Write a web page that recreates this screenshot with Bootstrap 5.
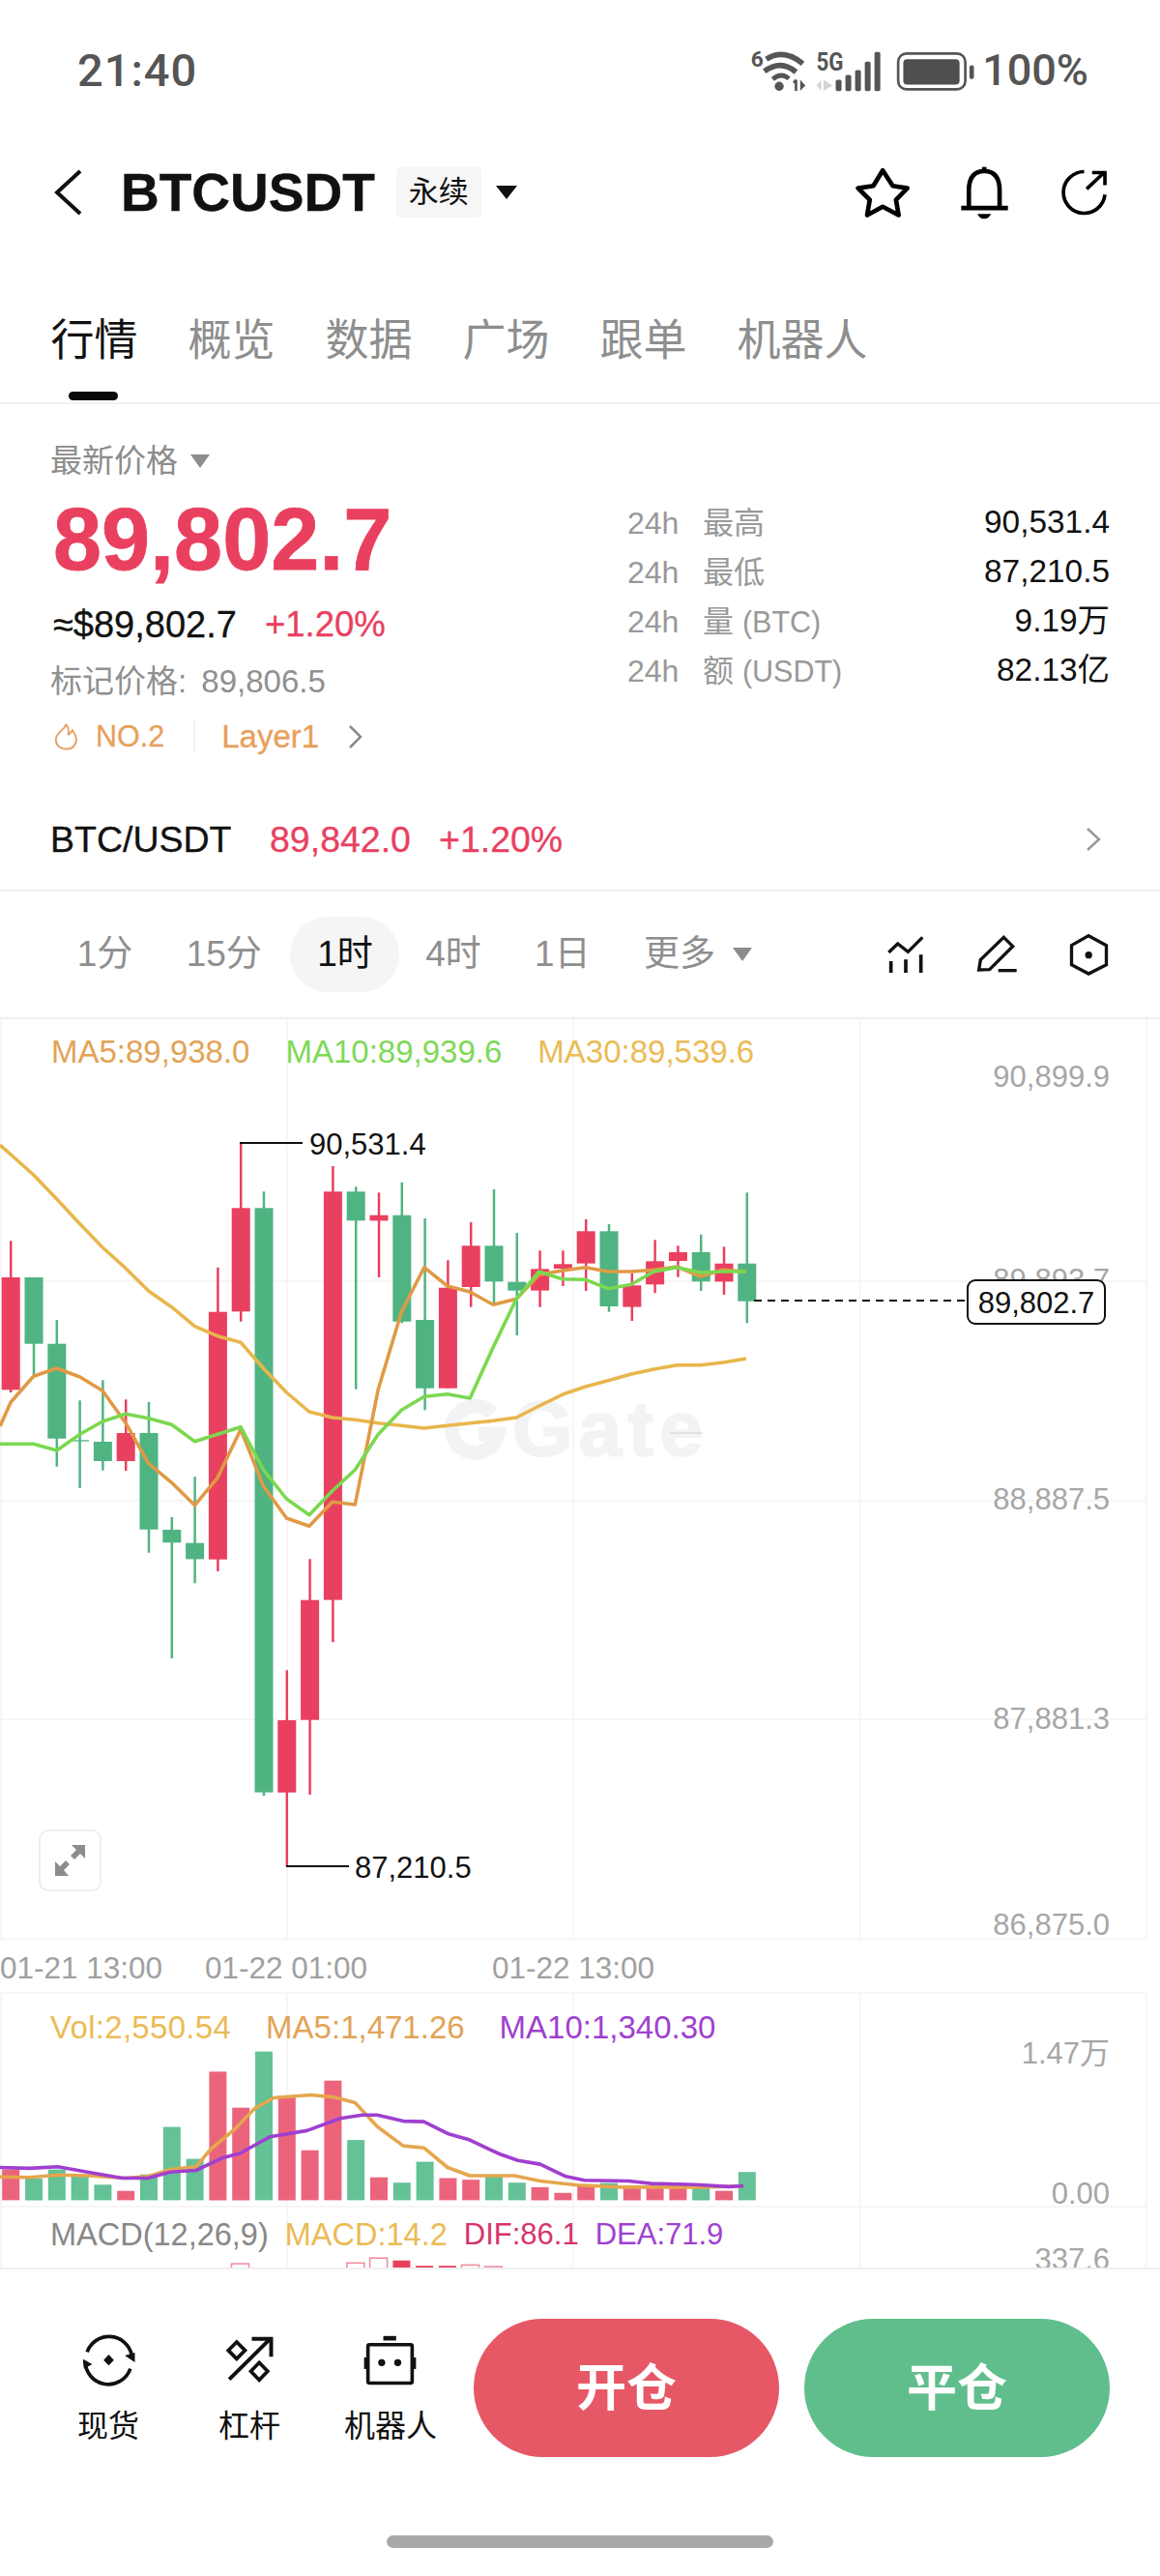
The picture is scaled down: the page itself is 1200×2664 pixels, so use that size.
<!DOCTYPE html>
<html lang="zh-CN">
<head>
  <meta charset="UTF-8" />
  <title>BTCUSDT</title>
  <link rel="stylesheet" href="https://cdn.jsdelivr.net/npm/bootstrap@5.3.3/dist/css/bootstrap.min.css" />
  <style>
    body { font-family: "Liberation Sans", "Noto Sans CJK SC", sans-serif; color: #111; background: #fff; width: 1200px; }
    svg { display: block; flex: none; }

    .status-row { height: 146px; padding: 0 74px 0 80px; color: #555; font-family: Roboto, "Liberation Sans", sans-serif; font-weight: 500; }
    .status-time { font-size: 47px; letter-spacing: 1px; }
    .status-pct { font-size: 45px; margin-left: 7px; }
    .battery-ico { margin-left: 13px; }
    .st-small { font-family: Roboto, sans-serif; font-weight: 700; fill: #555; }

    .head-row { height: 102px; padding: 4px 52px 0; }
    .head-title { font-size: 55px; font-weight: 700; margin-left: 37px; line-height: 1; -webkit-text-stroke: .4px #111; }
    .perp-tag { width: 88px; height: 52px; margin-left: 22px; background: #f6f6f6; font-size: 31px; border-radius: 4px; }
    .tri { width: 0; height: 0; border-style: solid; border-color: transparent; border-bottom-width: 0; }
    .tri-head { border-width: 14px 11.5px 0; border-top-color: #111; margin-left: 15px; }
    .tri-small { border-width: 14px 10px 0; border-top-color: #8c8c8c; }
    .head-icons { gap: 50px; }

    .tabs-row { height: 170px; padding: 74px 0 0 52.5px; gap: 52px; border-bottom: 2px solid #f2f2f2; align-items: flex-start; }
    .tab-link { padding: 0; font-size: 45px; line-height: 62px; color: #8e8e8e; position: relative; height: 88px; }
    .tab-link:hover { color: #8e8e8e; }
    .tab-on, .tab-on:hover { color: #111; }
    .tab-on::after { content: ""; position: absolute; left: 18px; top: 83px; width: 51px; height: 9px; border-radius: 5px; background: #0a0a0a; }

    .info-box { padding: 0 52px; height: 504px; border-bottom: 2px solid #f0f0f0; }
    .price-col { padding-top: 35px; }
    .last-label { font-size: 33px; line-height: 48px; color: #8c8c8c; gap: 13px; }
    .big-price { font-size: 90px; font-weight: 700; line-height: 100px; color: #e9405f; margin: 7px 0 0 3px; -webkit-text-stroke: .8px #e9405f; }
    .sub-price { font-size: 38px; line-height: 50px; margin: 13px 0 0 3px; gap: 29px; -webkit-text-stroke: .3px currentColor; }
    .sub-chg { font-size: 36.5px; }
    .txt-red { color: #e9405f; }
    .mark-line { font-size: 33px; line-height: 44px; color: #909090; margin-top: 12px; word-spacing: 6px; }
    .hot-row { height: 44px; margin: 13px 0 0 4px; font-size: 33px; color: #e8a05c; -webkit-text-stroke: .3px #e8a05c; }
    .hot-no { margin-left: 18px; font-size: 30.5px; }
    .hot-div { width: 2px; height: 33px; background: #f2f2f2; margin: 0 27px 0 30px; }
    .hot-arrow { margin-left: 30px; }
    .stats-col { width: 499px; padding-top: 97px; }
    .stat-row { height: 51px; font-size: 32px; }
    .stat-key { color: #999; }
    .stat-key i { display: inline-block; width: 78px; font-style: normal; }
    .stat-unit { font-size: 30.5px; }
    .stat-val { font-size: 33.4px; }
    .pair-row { height: 50px; margin-top: 59px; font-size: 37.5px; -webkit-text-stroke: .3px currentColor; }
    .pair-name { width: 227px; }
    .pair-chg { margin-left: 29px; }

    .tf-row { height: 132px; padding: 0 52px; border-bottom: 2px solid #f0f0f0; }
    .tf-item { padding: 0 27.7px; height: 78px; line-height: 78px; font-size: 37px; color: #8e8e8e; border-radius: 39px; }
    .tf-on { background: #f5f5f5; color: #111; margin: 0 -1px 0 2px; }
    .tf-more { margin-left: -10px; }
    .tf-icons { gap: 52px; }

    .chart-box { height: 1291px; overflow: hidden; }
    .legend-row { left: 52px; height: 40px; line-height: 40px; font-size: 33px; white-space: nowrap; }
    .legend-ma { top: 14px; left: 53px; gap: 37px; }
    .legend-vol { top: 1023px; gap: 36px; }
    .legend-macd { top: 1237px; gap: 17px; font-size: 32.5px; }
    .c-orange { color: #e2a356; }
    .c-green { color: #7ed957; }
    .c-yellow { color: #ebbb55; }
    .c-purple { color: #a03fd0; }
    .c-pink { color: #d6336c; }
    .c-grey { color: #888; }
    .vol-wide { letter-spacing: .3px; }
    .macd-tight { font-size: 31px; }
    .ax-txt { font-size: 31px; fill: #a6a6a6; }
    .ax-time { font-size: 31.5px; fill: #a0a0a0; }
    .hl-txt { font-size: 31px; fill: #111; }
    .wm-txt { font-size: 80px; font-weight: 700; fill: #f2f3f5; stroke: #f2f3f5; stroke-width: 2px; }
    .expand-btn { left: 40px; top: 838px; width: 65px; height: 64px; border: 2px solid #eee; border-radius: 10px; background: #fff; }

    .foot-box { height: 319px; padding-top: 51px; border-top: 2px solid #f0f0f0; }
    .foot-row { padding: 0 52px 0 39px; }
    .foot-item { width: 146px; padding-top: 15px; font-size: 32px; line-height: 40px; gap: 21px; }
    .act-btn { width: 316px; height: 143px; font-size: 52px; font-weight: 700; color: #fff; border: 0; border-radius: 72px; }
    .act-btn:hover { color: #fff; }
    .act-open, .act-open:hover { background: #e65866; margin-left: 13px; }
    .act-close, .act-close:hover { background: #60be8c; margin-left: 26px; }
    .home-bar { width: 400px; height: 13px; margin-top: 81px; background: #a8a8a8; border-radius: 7px; }
  </style>
</head>
<body>
  <!-- status bar -->
  <div class="status-row d-flex align-items-center justify-content-between">
    <span class="status-time">21:40</span>
    <div class="d-flex align-items-center">
      <svg width="137" height="52" viewBox="120 80 410 155">
        <text class="st-small" x="122" y="146" font-size="68">6</text>
        <g fill="none" stroke="#555" stroke-width="17">
          <path d="M170 122 Q225 88 283 136" />
          <path d="M164 160 Q215 122 262 162" />
          <path d="M190 184 Q216 162 240 182" stroke-width="14" />
        </g>
        <circle cx="210" cy="206" r="14" fill="#555" />
        <path d="M262 186 V220 M255 196 L262 186" fill="none" stroke="#555" stroke-width="8" />
        <path d="M275 186 V220 L291 204 Z" fill="#555" />
        <text class="st-small" x="325" y="158" font-size="78" textLength="84" lengthAdjust="spacingAndGlyphs">5G</text>
        <path d="M340 186 V220 L326 204 Z M347 186 V220 L375 204 Z" fill="#d4d4d4" />
        <g fill="#555">
          <rect x="385" y="186" width="18" height="35" rx="5" />
          <rect x="415" y="171" width="18" height="50" rx="5" />
          <rect x="445" y="156" width="18" height="65" rx="5" />
          <rect x="475" y="130" width="18" height="91" rx="5" />
          <rect x="505" y="100" width="18" height="121" rx="5" />
        </g>
      </svg>
      <svg class="battery-ico" width="83" height="43" viewBox="570 90 250 130">
        <rect x="579" y="100" width="210" height="112" rx="26" fill="none" stroke="#555" stroke-width="8" />
        <rect x="595" y="118" width="176" height="79" rx="12" fill="#4f4f4f" />
        <rect x="802" y="137" width="14" height="43" rx="6" fill="#555" />
      </svg>
      <span class="status-pct">100%</span>
    </div>
  </div>

  <!-- header -->
  <div class="head-row d-flex align-items-center justify-content-between">
    <div class="d-flex align-items-center">
      <svg width="36" height="50" viewBox="0 0 36 50"><path d="M31 3 L7 25 L31 47" fill="none" stroke="#111" stroke-width="4" /></svg>
      <span class="head-title">BTCUSDT</span>
      <span class="perp-tag d-flex align-items-center justify-content-center">永续</span>
      <span class="tri tri-head"></span>
    </div>
    <div class="head-icons d-flex align-items-center">
      <svg width="57" height="54" viewBox="430 450 170 160"><path d="M514 462 L545 510 L590 517 L555 553 L563 600 L514 574 L466 600 L474 553 L438 517 L485 510 Z" fill="none" stroke="#000" stroke-width="14" stroke-linejoin="round" /></svg>
      <svg width="53" height="57" viewBox="750 445 160 170">
        <path d="M781 575 V522 Q781 462 829 462 Q877 462 877 522 V575" fill="none" stroke="#000" stroke-width="14" />
        <path d="M757 577 H903" stroke="#000" stroke-width="14" />
        <rect x="822" y="449" width="14" height="16" fill="#000" />
        <path d="M808 596 H850 Q844 611 829 611 Q814 611 808 596 Z" fill="#000" />
      </svg>
      <svg width="53" height="50" viewBox="1065 460 160 150">
        <path d="M1145 470 A65 65 0 1 0 1210 542" fill="none" stroke="#000" stroke-width="11" />
        <path d="M1153 524 L1204 476 M1170 473 H1210 V512" fill="none" stroke="#000" stroke-width="11" />
      </svg>
    </div>
  </div>

  <!-- tabs -->
  <div class="nav tabs-row">
    <a class="nav-link tab-link tab-on" href="#">行情</a>
    <a class="nav-link tab-link" href="#">概览</a>
    <a class="nav-link tab-link" href="#">数据</a>
    <a class="nav-link tab-link" href="#">广场</a>
    <a class="nav-link tab-link" href="#">跟单</a>
    <a class="nav-link tab-link" href="#">机器人</a>
  </div>

  <!-- price info -->
  <div class="info-box">
    <div class="d-flex justify-content-between">
      <div class="price-col">
        <div class="last-label d-flex align-items-center">最新价格 <span class="tri tri-small"></span></div>
        <div class="big-price">89,802.7</div>
        <div class="sub-price d-flex align-items-center"><span>≈$89,802.7</span><span class="txt-red sub-chg">+1.20%</span></div>
        <div class="mark-line">标记价格: 89,806.5</div>
        <div class="hot-row d-flex align-items-center">
          <svg width="25" height="28" viewBox="48 50 75 85"><path d="M85 54 C80 72 55 76 53 100 C52 120 68 131 86 131 C105 131 118 118 117 98 C116 86 108 78 105 72 C100 80 98 85 92 85 C96 72 92 62 85 54 Z" fill="none" stroke="#e8a46a" stroke-width="6" /></svg>
          <span class="hot-no">NO.2</span>
          <span class="hot-div"></span>
          <span>Layer1</span>
          <svg class="hot-arrow" width="15" height="26" viewBox="0 0 15 26"><path d="M2 2 L13 13 L2 24" fill="none" stroke="#888" stroke-width="2.5" /></svg>
        </div>
      </div>
      <div class="stats-col">
        <div class="stat-row d-flex align-items-center justify-content-between"><span class="stat-key"><i>24h</i>最高</span><span class="stat-val">90,531.4</span></div>
        <div class="stat-row d-flex align-items-center justify-content-between"><span class="stat-key"><i>24h</i>最低</span><span class="stat-val">87,210.5</span></div>
        <div class="stat-row d-flex align-items-center justify-content-between"><span class="stat-key"><i>24h</i>量 <span class="stat-unit">(BTC)</span></span><span class="stat-val">9.19万</span></div>
        <div class="stat-row d-flex align-items-center justify-content-between"><span class="stat-key"><i>24h</i>额 <span class="stat-unit">(USDT)</span></span><span class="stat-val">82.13亿</span></div>
      </div>
    </div>
    <div class="pair-row d-flex align-items-center">
      <span class="pair-name">BTC/USDT</span>
      <span class="txt-red">89,842.0</span>
      <span class="txt-red pair-chg">+1.20%</span>
      <svg class="ms-auto me-2" width="18" height="26" viewBox="0 0 18 26"><path d="M3 2 L15 13 L3 24" fill="none" stroke="#999" stroke-width="2.5" /></svg>
    </div>
  </div>

  <!-- timeframes -->
  <div class="tf-row d-flex align-items-center justify-content-between">
    <div class="d-flex align-items-center">
      <span class="tf-item">1分</span>
      <span class="tf-item">15分</span>
      <span class="tf-item tf-on">1时</span>
      <span class="tf-item">4时</span>
      <span class="tf-item">1日</span>
      <span class="tf-item">更多</span>
      <span class="tri tri-small tf-more"></span>
    </div>
    <div class="tf-icons d-flex align-items-center">
      <svg width="40" height="42" viewBox="120 78 120 126" fill="none" stroke="#111" stroke-width="10">
        <path d="M127 135 L155 108 L187 133 L232 88" />
        <path d="M134 162 V198 M180 157 V198 M227 142 V198" stroke-width="11" />
      </svg>
      <svg width="44" height="42" viewBox="400 72 130 126" fill="none" stroke="#111" stroke-width="10">
        <path d="M410 183 L415 152 L487 82 L515 110 L443 182 Z" />
        <path d="M470 185 H527" />
      </svg>
      <svg width="43" height="44" viewBox="680 72 128 132" fill="none" stroke="#111" stroke-width="10">
        <path d="M743 80 L798 110 V170 L743 198 L690 170 V110 Z" />
        <circle cx="743" cy="140" r="11" fill="#111" stroke="none" />
      </svg>
    </div>
  </div>

  <!-- chart, the svg uses page coordinates -->
  <div class="chart-box position-relative">
    <svg id="chart" width="1200" height="1291" viewBox="0 1054 1200 1291"></svg>
    <div class="legend-row legend-ma position-absolute d-flex">
      <span class="c-orange">MA5:89,938.0</span><span class="c-green">MA10:89,939.6</span><span class="c-yellow">MA30:89,539.6</span>
    </div>
    <div class="legend-row legend-vol position-absolute d-flex">
      <span class="c-yellow vol-wide">Vol:2,550.54</span><span class="c-orange">MA5:1,471.26</span><span class="c-purple">MA10:1,340.30</span>
    </div>
    <div class="legend-row legend-macd position-absolute d-flex">
      <span class="c-grey">MACD(12,26,9)</span><span class="c-yellow">MACD:14.2</span><span class="c-pink macd-tight">DIF:86.1</span><span class="c-purple macd-tight">DEA:71.9</span>
    </div>
    <div class="expand-btn position-absolute d-flex align-items-center justify-content-center">
      <svg width="33" height="32" viewBox="0 0 33 32" fill="#8c8c8c">
        <path d="M18 0 H32 V14 L27 9 L21 15 L17 11 L23 5 Z" />
        <path d="M1 32 V17 L6 22 L12 16 L16 20 L10 26 L15 32 Z" />
      </svg>
    </div>
  </div>

  <!-- bottom actions -->
  <div class="foot-box">
    <div class="foot-row d-flex align-items-start">
      <div class="foot-item d-flex flex-column align-items-center">
        <svg width="57" height="55" viewBox="70 50 170 165" fill="none" stroke="#111" stroke-width="11">
          <path d="M88 108 A72 72 0 0 1 226 116" />
          <path d="M222 160 A72 72 0 0 1 82 136" />
          <path d="M205 119 L236 110 L236 140 Z M75 130 L104 146 L78 160 Z" fill="#111" stroke="none" />
          <path d="M155 116 L171 133 L155 150 L139 133 Z" fill="#111" stroke="none" />
        </svg>
        <span>现货</span>
      </div>
      <div class="foot-item d-flex flex-column align-items-center">
        <svg width="52" height="55" viewBox="510 57 155 165" fill="none" stroke="#111" stroke-width="12">
          <path d="M525 200 L650 76" />
          <path d="M595 74 H655 V130" />
          <path d="M548 84 L574 110 L548 136 L522 110 Z" stroke-width="11" />
          <path d="M618 148 L644 175 L618 202 L592 175 Z" stroke-width="11" />
        </svg>
        <span>杠杆</span>
      </div>
      <div class="foot-item d-flex flex-column align-items-center">
        <svg width="58" height="55" viewBox="945 50 175 165" fill="#111">
          <rect x="962" y="85" width="138" height="120" rx="5" fill="none" stroke="#111" stroke-width="11" />
          <rect x="1010" y="58" width="40" height="14" />
          <rect x="950" y="125" width="12" height="36" />
          <rect x="1100" y="125" width="12" height="36" />
          <circle cx="1005" cy="141" r="11" />
          <circle cx="1055" cy="141" r="11" />
        </svg>
        <span>机器人</span>
      </div>
      <button type="button" class="btn act-btn act-open">开仓</button>
      <button type="button" class="btn act-btn act-close">平仓</button>
    </div>
    <div class="home-bar mx-auto"></div>
  </div>

  <script src="https://cdn.jsdelivr.net/npm/bootstrap@5.3.3/dist/js/bootstrap.bundle.min.js"></script>
  <script>
    const RED = '#e9405f', GREEN = '#4fb482';
    // main pane values were read off a crop: x/1.96, 1060 + y/3
    const mx = x => (x / 1.96).toFixed(1);
    const my = y => (1060 + y / 3).toFixed(1);
    // volume pane: x/1.3067, 2000 + y/2.36
    const vx = x => (x / 1.3067).toFixed(1);
    const vy = y => (2000 + y / 2.36).toFixed(1);

    // color, wick top, body top, body bottom, wick bottom
    const candles = [
      ['r', 670, 783, 1132, 1140], ['g', 783, 783, 989, 1090], ['g', 915, 989, 1283, 1370],
      ['g', 1165, 1288, 1292, 1437], ['g', 1102, 1293, 1353, 1382], ['r', 1162, 1266, 1353, 1383],
      ['g', 1170, 1266, 1565, 1637], ['g', 1527, 1566, 1606, 1965], ['g', 1402, 1607, 1657, 1732],
      ['r', 752, 890, 1658, 1695], ['r', 365, 568, 889, 920], ['g', 517, 568, 2381, 2392],
      ['r', 2002, 2157, 2381, 2610], ['r', 1657, 1784, 2156, 2388], ['r', 438, 517, 1784, 1915],
      ['g', 502, 517, 607, 1130], ['r', 520, 590, 607, 783], ['g', 488, 590, 920, 925],
      ['g', 600, 915, 1127, 1195], ['r', 730, 815, 1127, 1127], ['r', 612, 685, 813, 875],
      ['g', 510, 685, 796, 870], ['g', 645, 797, 824, 963], ['r', 700, 757, 824, 875],
      ['r', 700, 742, 756, 810], ['r', 603, 640, 740, 825], ['g', 618, 640, 873, 890],
      ['r', 770, 808, 875, 918], ['r', 667, 733, 805, 832], ['r', 685, 705, 732, 782],
      ['g', 650, 705, 796, 825], ['r', 688, 740, 796, 837], ['g', 520, 740, 857, 925]
    ];
    const ma30 = [[0,372],[68,465],[115,540],[162,617],[208,690],[255,755],[301,825],[348,875],[395,935],[441,965],[488,985],[534,1065],[581,1140],[627,1200],[674,1218],[720,1225],[767,1235],[814,1243],[860,1251],[907,1243],[953,1235],[1000,1228],[1047,1218],[1093,1182],[1140,1147],[1187,1122],[1233,1103],[1280,1083],[1326,1068],[1373,1055],[1420,1055],[1466,1047],[1513,1035]];
    const ma5 = [[0,1245],[22,1170],[68,1090],[115,1065],[162,1092],[208,1135],[255,1235],[301,1360],[348,1420],[395,1490],[441,1405],[488,1255],[534,1430],[581,1530],[627,1555],[674,1480],[720,1488],[767,1130],[814,890],[860,752],[907,810],[953,828],[1000,868],[1047,850],[1093,775],[1140,762],[1187,752],[1233,765],[1280,765],[1326,760],[1373,750],[1420,780],[1466,760],[1513,765]];
    const ma10 = [[0,1300],[68,1300],[115,1320],[162,1270],[208,1230],[255,1207],[301,1220],[348,1240],[395,1292],[441,1270],[488,1247],[534,1380],[581,1470],[627,1520],[674,1445],[720,1380],[767,1270],[814,1195],[860,1153],[907,1145],[953,1158],[1000,1000],[1047,850],[1093,765],[1140,788],[1187,790],[1233,818],[1280,805],[1326,765],[1373,752],[1420,768],[1466,765],[1513,765]];

    // color and top of each volume bar
    const vols = [['r',575],['g',597],['g',575],['g',590],['g',612],['r',627],['g',587],['g',471],['g',549],['r',336],['r',424],['g',287],['r',395],['r',528],['r',358],['g',503],['r',594],['g',607],['g',556],['r',596],['r',600],['g',590],['g',607],['r',618],['r',632],['r',615],['g',608],['r',618],['r',615],['r',615],['g',618],['r',627],['g',581]];
    const volMa5 = [[0,593],[40,594],[80,588],[120,590],[170,596],[200,592],[230,575],[265,568],[285,525],[315,480],[345,425],[370,400],[420,393],[450,398],[480,412],[510,470],[545,517],[573,522],[605,570],[635,590],[695,590],[730,603],[780,613],[840,618],[900,618],[950,618],[1005,615]];
    const volMa10 = [[0,570],[40,572],[78,568],[120,582],[165,596],[200,596],[230,581],[265,577],[300,547],[325,535],[365,495],[415,480],[460,450],[490,442],[510,442],[545,457],[573,458],[605,487],[635,503],[675,537],[700,553],[730,562],[765,592],[790,601],[850,603],[880,609],[940,612],[985,617],[1005,615]];

    let out = '';
    const line = (x1, y1, x2, y2, c, w, extra) => `<line x1="${x1}" y1="${y1}" x2="${x2}" y2="${y2}" stroke="${c}" stroke-width="${w}" ${extra || ''}/>`;
    const text = (x, y, cls, s, anchor, extra) => `<text x="${x}" y="${y}" class="${cls}" text-anchor="${anchor || 'start'}" ${extra || ''}>${s}</text>`;
    const poly = (pts, c, w, fx, fy) => `<polyline fill="none" stroke="${c}" stroke-width="${w}" stroke-linejoin="round" points="${pts.map(p => fx(p[0]) + ',' + fy(p[1])).join(' ')}"/>`;

    // grid
    const GRID = '#f3f3f3';
    [1, 297, 593, 890, 1186].forEach(x => {
      out += line(x, 1054, x, 2005, GRID, 1.5);
      out += line(x, 2062, x, 2345, GRID, 1.5);
    });
    [1325, 1552, 1778, 2005, 2061, 2282].forEach(y => { out += line(0, y, 1186, y, GRID, 1.5); });

    // watermark
    out += `<path d="M509 1462 A24 24 0 1 0 515 1483 H495" fill="none" stroke="#f2f3f5" stroke-width="15"/>`;
    out += text(530, 1505, 'wm-txt', 'Gate', 'start', 'textLength="197"');
    out += line(693, 1482, 727, 1482, '#cfcfcf', 1);

    // axis labels
    [[1124, '90,899.9'], [1334, '89,893.7'], [1561, '88,887.5'], [1788, '87,881.3'], [2001, '86,875.0'], [2134, '1.47万'], [2279, '0.00'], [2347, '337.6']]
      .forEach(a => { out += text(1148, a[0], 'ax-txt', a[1], 'end'); });
    [[0, '01-21 13:00'], [212, '01-22 01:00'], [509, '01-22 13:00']].forEach(a => { out += text(a[0], 2046, 'ax-time', a[1]); });

    // candles
    candles.forEach((c, i) => {
      const x = 11.2 + 23.8 * i, col = c[0] === 'r' ? RED : GREEN;
      out += line(x, my(c[1]), x, my(c[4]), col, 2.5);
      out += `<rect x="${(x - 9.5).toFixed(1)}" y="${my(c[2])}" width="19" height="${((c[3] - c[2]) / 3).toFixed(1)}" fill="${col}"/>`;
    });
    out += poly(ma30, '#e8b64c', 3.6, mx, my) + poly(ma5, '#e09a45', 3.6, mx, my) + poly(ma10, '#7bd850', 3.6, mx, my);

    // high / low callouts
    out += line(248, 1182, 313, 1182, '#111', 2);
    out += text(320, 1194, 'hl-txt', '90,531.4');
    out += line(296, 1930, 361, 1930, '#111', 2);
    out += text(367, 1942, 'hl-txt', '87,210.5');

    // current price line and tag
    out += line(780, 1345, 1000, 1345, '#111', 2, 'stroke-dasharray="8 6"');
    out += `<rect x="1001" y="1324" width="142" height="45" rx="8" fill="#fff" stroke="#111" stroke-width="2"/>`;
    out += text(1072, 1358, 'hl-txt', '89,802.7', 'middle');

    // volume
    vols.forEach((v, i) => {
      const x = 11.2 + 23.8 * i;
      out += `<rect x="${(x - 9).toFixed(1)}" y="${vy(v[1])}" width="18" height="${((650 - v[1]) / 2.36).toFixed(1)}" fill="${v[0] === 'r' ? '#ec647c' : '#64c296'}"/>`;
    });
    out += poly(volMa5, '#e6a64e', 3.6, vx, vy) + poly(volMa10, '#a03fd0', 3.6, vx, vy);

    // macd bars, cut off by the bottom bar
    [[313, 805, 1], [469, 803, 1], [500, 791, 1], [531, 797, 0], [562, 810, 0], [593, 810, 0], [624, 808, 1], [655, 812, 1]].forEach(b => {
      const y = vy(b[1]);
      out += b[2]
        ? `<rect x="${vx(b[0])}" y="${y}" width="18" height="30" fill="#fff" stroke="#ec8a9c" stroke-width="1.5"/>`
        : `<rect x="${vx(b[0])}" y="${y}" width="18" height="30" fill="${RED}"/>`;
    });

    document.getElementById('chart').innerHTML = out;
  </script>
</body>
</html>
